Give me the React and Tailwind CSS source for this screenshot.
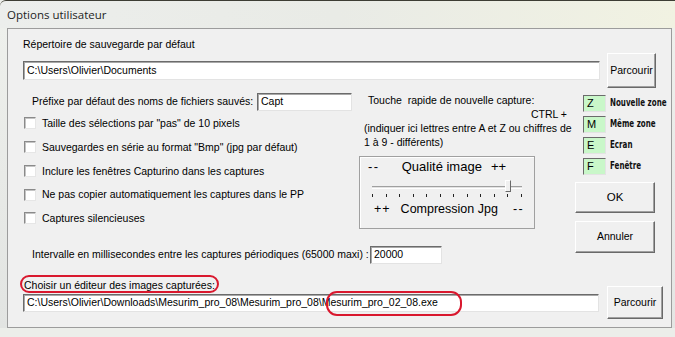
import React from "react";

const ui = { fontFamily: '"Liberation Sans", Arial, sans-serif' };

const Field = ({ className = "", children }) => (
    <div
        className={`bg-white border border-t-[#6b6b6b] border-l-[#6b6b6b] border-r-[#e3e3e3] border-b-[#e3e3e3] shadow-[inset_1px_1px_0_#a8a8a8] flex items-center pl-[3px] text-[10.5px] text-black overflow-hidden whitespace-nowrap ${className}`}
    >
        {children}
    </div>
);

const Btn = ({ className = "", children }) => (
    <div
        className={`bg-[#f0f0f0] border border-t-white border-l-white border-r-[#696969] border-b-[#696969] shadow-[inset_-1px_-1px_0_#a0a0a0] flex items-center justify-center text-[10.5px] text-black ${className}`}
    >
        {children}
    </div>
);

const Check = ({ label, h }) => (
    <div className={`flex items-center ${h}`}>
        <div className="w-[12px] h-[12px] bg-white border border-t-[#8a8a8a] border-l-[#8a8a8a] border-r-[#e6e6e6] border-b-[#e6e6e6] shadow-[inset_1px_1px_0_#c4c4c4] ml-[1px]" />
        <span className="ml-[6px] text-[10.5px] leading-[13px] whitespace-nowrap">{label}</span>
    </div>
);

const HotKey = ({ letter, label }) => (
    <div className="flex items-center">
        <div className="w-[23px] h-[17px] bg-[#c9f7c9] border border-t-[#6b6b6b] border-l-[#6b6b6b] border-r-[#e3e3e3] border-b-[#e3e3e3] text-[11px] leading-[15px] pl-[3px] shrink-0">
            {letter}
        </div>
        <span
            className="ml-[4px] text-[11px] font-black whitespace-nowrap text-[#111] scale-x-[0.72] origin-left inline-block"
            style={{ fontFamily: '"DejaVu Sans Condensed", "Liberation Sans Narrow", sans-serif' }}
        >
            {label}
        </span>
    </div>
);

export default function App() {
    const ticks = Array.from({ length: 12 }, (_, i) => i);

    return (
        <div className="w-[675px] h-[337px] overflow-hidden bg-[#eceeea] text-black" style={ui}>
            {/* title bar */}
            <div className="h-[28px] rounded-tl-[6px] bg-gradient-to-r from-[#eceeec] via-[#e9ebe6] to-[#f1f2e2] border-t border-[#3d3d34] flex items-center pl-[7px]">
                <span
                    className="text-[11.5px] text-[#1e1e1e]"
                    style={{ fontFamily: '"Open Sans", "Noto Sans", sans-serif' }}
                >
                    Options utilisateur
                </span>
            </div>

            <div className="flex">
                <div className="w-[7px] bg-gradient-to-b from-[#eef0ec] to-[#e2e4e2]" />

                <div className="relative w-[665px] h-[300px] bg-[#f0f0f0] border border-[#9c9c9c] pt-[9px] pl-[15px]">
                    {/* default folder */}
                    <div className="text-[10.5px] leading-[13px]">Répertoire de sauvegarde par défaut</div>
                    <div className="flex items-center h-[35px] mt-[2px]">
                        <Field className="w-[577px] h-[19px]">C:\Users\Olivier\Documents</Field>
                        <Btn className="w-[49px] h-[35px] ml-[7px]">Parcourir</Btn>
                    </div>

                    <div className="flex">
                        <div className="w-[552px] flex flex-col">
                            <div className="flex">
                                {/* left column */}
                                <div className="w-[336px] flex flex-col">
                                    <div className="flex items-center h-[18px] mt-[5px] pl-[9px]">
                                        <span className="text-[10.5px] w-[225px] whitespace-nowrap">Préfixe par défaut des noms de fichiers sauvés:</span>
                                        <Field className="w-[95px] h-[18px]">Capt</Field>
                                    </div>
                                    <Check h="h-[24px]" label={'Taille des sélections par "pas" de 10 pixels'} />
                                    <Check h="h-[24px]" label={'Sauvegardes en série au format "Bmp" (jpg par défaut)'} />
                                    <Check h="h-[24px]" label="Inclure les fenêtres Capturino dans les captures" />
                                    <Check h="h-[23px]" label="Ne pas copier automatiquement les captures dans le PP" />
                                    <Check h="h-[24px]" label="Captures silencieuses" />
                                </div>

                                {/* middle column */}
                                <div className="w-[216px] flex flex-col">
                                    <div className="mt-[5px] text-[10.5px] leading-[14px]">
                                        <div className="pl-[9px]">Touche&nbsp; rapide de nouvelle capture:</div>
                                        <div className="text-right pr-[8px]">CTRL +</div>
                                        <div className="pl-[5px] whitespace-nowrap">(indiquer ici lettres entre A et Z ou chiffres de</div>
                                        <div className="pl-[5px]">1 à 9 - différents)</div>
                                    </div>
                                    <div className="mt-[7px] w-[176px] h-[73px] border border-[#a0a0a0] shadow-[inset_1px_1px_0_#ffffff] flex flex-col">
                                        <div className="flex items-center text-[13px] leading-[15px] mt-[2px] pl-[8px] whitespace-nowrap">
                                            <span className="tracking-[1.5px]">--</span>
                                            <span className="ml-[22px]">Qualité image</span>
                                            <span className="ml-[9px]">++</span>
                                        </div>
                                        <div className="relative mx-[12px] mt-[10px] h-[14px]">
                                            <div className="absolute left-0 right-0 top-[2px] h-[3px] border-t border-t-[#a0a0a0] border-b border-b-white bg-[#e3e3e3]" />
                                            <div className="absolute left-[133px] top-[-4px] w-[6px] h-[12px] bg-[#f0f0f0] border border-t-white border-l-white border-r-[#696969] border-b-[#696969]" />
                                            <div className="absolute left-0 right-0 top-[10px] flex justify-between">
                                                {ticks.map((t) => (
                                                    <div key={t} className="w-[1px] h-[3px] bg-[#222]" />
                                                ))}
                                            </div>
                                        </div>
                                        <div className="flex items-center text-[12.5px] leading-[15px] mt-[4px] pl-[14px] whitespace-nowrap">
                                            <span className="tracking-[1px]">++</span>
                                            <span className="ml-[10px]">Compression Jpg</span>
                                            <span className="ml-[15px] tracking-[1.5px]">--</span>
                                        </div>
                                    </div>
                                </div>
                            </div>

                            {/* interval */}
                            <div className="flex items-center h-[18px] mt-[16px] pl-[9px]">
                                <span className="text-[10.5px] w-[338px] whitespace-nowrap">
                                    Intervalle en millisecondes entre les captures périodiques (65000 maxi) :
                                </span>
                                <Field className="w-[72px] h-[18px]">20000</Field>
                            </div>
                        </div>

                        {/* right column */}
                        <div className="flex flex-col">
                            <div className="flex flex-col gap-[4px] mt-[7px] pl-[8px]">
                                <HotKey letter="Z" label="Nouvelle zone" />
                                <HotKey letter="M" label="Même zone" />
                                <HotKey letter="E" label="Ecran" />
                                <HotKey letter="F" label="Fenêtre" />
                            </div>
                            <Btn className="w-[80px] h-[31px] mt-[7px] text-[11.5px]">OK</Btn>
                            <Btn className="w-[80px] h-[32px] mt-[8px]">Annuler</Btn>
                        </div>
                    </div>

                    {/* editor */}
                    <div className="flex items-start mt-[15px]">
                        <div className="flex flex-col">
                            <div className="text-[10.5px] leading-[13px] pl-[1px]">Choisir un éditeur des images capturées:</div>
                            <Field className="w-[576px] h-[18px] mt-[2px]">
                                C:\Users\Olivier\Downloads\Mesurim_pro_08\Mesurim_pro_08\Mesurim_pro_02_08.exe
                            </Field>
                        </div>
                        <Btn className="w-[56px] h-[33px] ml-[8px] mt-[7px]">Parcourir</Btn>
                    </div>

                    {/* highlight marks */}
                    <div className="absolute left-[12px] top-[246px] w-[199px] h-[18px] border-2 border-[#d9182e] rounded-[9px]" />
                    <div className="absolute left-[318px] top-[262px] w-[136px] h-[25px] border-2 border-[#d9182e] rounded-[11px]" />
                </div>

                <div className="flex-1 bg-gradient-to-b from-[#eef0ec] to-[#e4e6e4]" />
            </div>
        </div>
    );
}
